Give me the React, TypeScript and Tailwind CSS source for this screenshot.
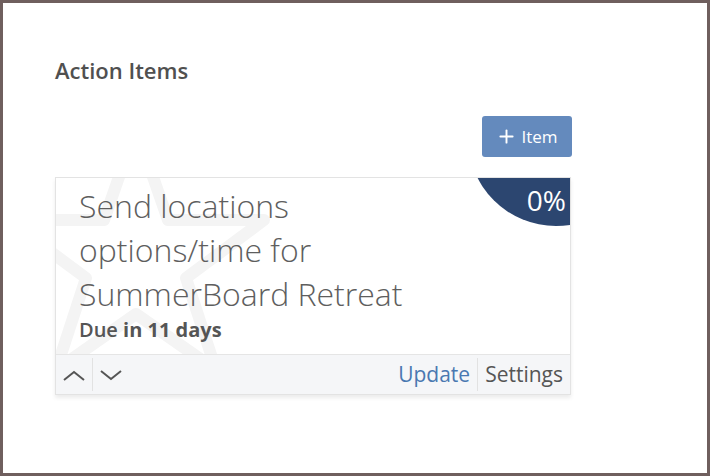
import { Plus } from "lucide-react";

function Chevron({ up }: { up?: boolean }) {
  return (
    <svg width="22" height="12" viewBox="0 0 22 12" className="text-[#555]">
      <path
        d={up ? "M1 10 L11 2 L21 10" : "M1 2 L11 10 L21 2"}
        fill="none"
        stroke="currentColor"
        strokeWidth="2"
      />
    </svg>
  );
}

function StarMark() {
  // faint watermark behind the card text
  return (
    <svg
      className="pointer-events-none absolute -left-[60px] -top-[70px]"
      width="280"
      height="280"
      viewBox="0 0 280 280"
    >
      <polygon
        points="140,20 172,112 268,112 190,170 220,262 140,206 60,262 90,170 12,112 108,112"
        fill="none"
        stroke="#f4f4f4"
        strokeWidth="12"
        strokeLinejoin="round"
      />
    </svg>
  );
}

export default function App() {
  return (
    <div className="h-[476px] w-[710px] border-[3px] border-[#6f5f5e] bg-white font-['Open_Sans',sans-serif]">
      <div className="w-[569px] pl-[52px] pt-[52px]">
        <h2 className="text-[22px] leading-[30px] font-semibold text-[#505050]">
          Action Items
        </h2>
        <div className="mt-[31px] flex justify-end">
          <button className="flex h-[41px] w-[90px] items-center justify-center gap-1 rounded-[3px] bg-[#648abd] text-[17px] text-white">
            <Plus size={21} strokeWidth={2.2} />
            <span>Item</span>
          </button>
        </div>
        <div className="relative mt-[20px] w-[516px] overflow-hidden border border-[#e3e3e3] bg-white shadow-[0_3px_4px_rgba(0,0,0,0.08)]">
          <StarMark />
          <div className="absolute left-[412px] top-[-128px] h-[176px] w-[176px] rounded-full bg-[#2c4670]" />
          <div className="absolute right-[4px] top-[3px] text-[28px] leading-[38px] text-white">
            0%
          </div>
          <div className="relative px-[23px] pt-[6px] pb-[10px]">
            <p className="w-[350px] text-[32px] leading-[44px] font-light text-[#5e5e5e]">
              Send locations options/time for SummerBoard Retreat
            </p>
            <p className="text-[20px] leading-[28px] font-semibold text-[#555]">
              Due <span className="font-bold">in 11 days</span>
            </p>
          </div>
          <div className="relative flex h-[40px] items-stretch border-t border-[#e5e5e5] bg-[#f5f6f8]">
            <button className="flex w-[36px] items-center justify-center pt-[2px]">
              <Chevron up />
            </button>
            <div className="my-[3px] w-px bg-[#e2e2e2]" />
            <button className="flex w-[36px] items-center justify-center">
              <Chevron />
            </button>
            <div className="flex-1" />
            <button className="flex items-center px-[7px] text-[21px] text-[#4a78b1]">
              Update
            </button>
            <div className="my-[3px] w-px bg-[#e2e2e2]" />
            <button className="flex items-center px-[7px] text-[21px] text-[#555]">
              Settings
            </button>
          </div>
        </div>
      </div>
    </div>
  );
}
